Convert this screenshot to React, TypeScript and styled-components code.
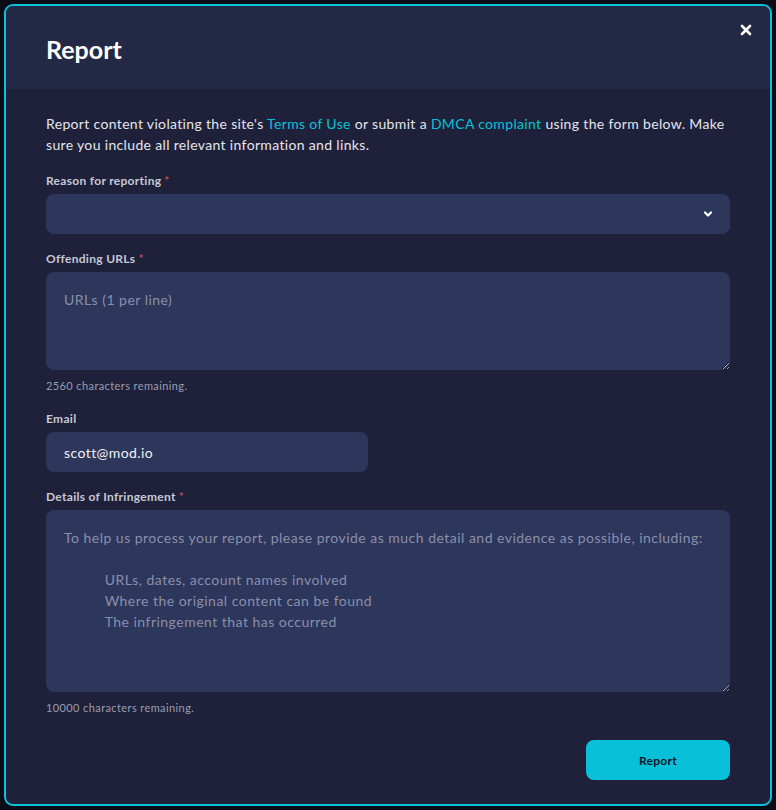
import React from "react";
import styled, { createGlobalStyle } from "styled-components";

const GlobalStyle = createGlobalStyle`
  html, body {
    margin: 0;
    padding: 0;
    background: #0b0d16;
    font-family: Lato, "Noto Sans", sans-serif;
  }
  * {
    box-sizing: border-box;
  }
`;

const Page = styled.div`
  padding: 4px;
  width: 776px;
`;

const Modal = styled.div`
  width: 768px;
  border: 2px solid #0ac2d9;
  border-radius: 9px;
  background: #1e2139;
  overflow: hidden;
`;

const Header = styled.div`
  display: flex;
  align-items: center;
  justify-content: space-between;
  height: 83px;
  padding: 0 40px;
  background: #232944;
  position: relative;
`;

const Title = styled.h1`
  margin: 0;
  padding-top: 2px;
  font-size: 25px;
  font-weight: 700;
  color: #ffffff;
`;

const CloseButton = styled.button`
  position: absolute;
  top: 12px;
  right: 12px;
  width: 24px;
  height: 24px;
  padding: 0;
  border: none;
  background: transparent;
  cursor: pointer;
  display: flex;
  align-items: center;
  justify-content: center;
`;

const Body = styled.div`
  padding: 24px 40px 24px;
  display: flex;
  flex-direction: column;
`;

const Intro = styled.p`
  margin: 0 0 18px;
  font-size: 14px;
  line-height: 21px;
  letter-spacing: 0.34px;
  color: #e4e6ee;

  a {
    color: #0ac2d9;
    text-decoration: none;
  }
`;

const Field = styled.div<{ $gap?: number }>`
  display: flex;
  flex-direction: column;
  margin-bottom: ${(p) => p.$gap ?? 17}px;
`;

const Label = styled.label`
  font-size: 12px;
  line-height: 16px;
  font-weight: 700;
  letter-spacing: 0.3px;
  color: #c6c8d5;
  margin-bottom: 5px;

  span {
    color: #c24650;
    margin-left: 3px;
  }
`;

const SelectBox = styled.div`
  height: 40px;
  border-radius: 8px;
  background: #2d365b;
  display: flex;
  align-items: center;
  justify-content: flex-end;
  padding: 0 17px;
`;

const TextArea = styled.textarea<{ $height: number }>`
  height: ${(p) => p.$height}px;
  width: 100%;
  resize: vertical;
  border: none;
  outline: none;
  border-radius: 8px;
  background: #2d365b;
  padding: 17px 18px;
  font-family: Lato, "Noto Sans", sans-serif;
  font-size: 14px;
  line-height: 21px;
  letter-spacing: 0.48px;
  color: #e4e6ee;

  &::placeholder {
    color: #8a8fac;
    white-space: pre-wrap;
  }
`;

const Input = styled.input<{ $width: number }>`
  width: ${(p) => p.$width}px;
  height: 40px;
  border: none;
  outline: none;
  border-radius: 8px;
  background: #2d365b;
  padding: 0 18px;
  font-family: Lato, "Noto Sans", sans-serif;
  font-size: 14px;
  letter-spacing: 0.42px;
  color: #f1f2f6;
`;

const Helper = styled.div`
  margin-top: 9px;
  font-size: 11px;
  line-height: 14px;
  letter-spacing: 0.4px;
  color: #9a9db2;
`;

const Footer = styled.div`
  display: flex;
  justify-content: flex-end;
  margin-top: 25px;
`;

const SubmitButton = styled.button`
  width: 144px;
  height: 40px;
  border: none;
  border-radius: 8px;
  background: #08c1d8;
  color: #111528;
  font-family: Lato, "Noto Sans", sans-serif;
  font-size: 12px;
  font-weight: 700;
  letter-spacing: 0.3px;
  cursor: pointer;
`;

const detailsPlaceholder =
  "To help us process your report, please provide as much detail and evidence as possible, including:\n\n" +
  "          URLs, dates, account names involved\n" +
  "          Where the original content can be found\n" +
  "          The infringement that has occurred";

function App() {
  return (
    <>
      <GlobalStyle />
      <Page>
        <Modal>
          <Header>
            <Title>Report</Title>
            <CloseButton aria-label="Close">
              <svg width="12" height="12" viewBox="0 0 12 12">
                <path
                  d="M2 2 L10 10 M10 2 L2 10"
                  stroke="#ffffff"
                  strokeWidth="2.6"
                  strokeLinecap="round"
                />
              </svg>
            </CloseButton>
          </Header>
          <Body>
            <Intro>
              Report content violating the site's <a href="#">Terms of Use</a> or submit a{" "}
              <a href="#">DMCA complaint</a> using the form below. Make sure you include all
              relevant information and links.
            </Intro>

            <Field>
              <Label>
                Reason for reporting<span>*</span>
              </Label>
              <SelectBox>
                <svg width="10" height="8" viewBox="0 0 10 8">
                  <path
                    d="M2 2.5 L5 5.5 L8 2.5"
                    stroke="#ffffff"
                    strokeWidth="2.2"
                    fill="none"
                    strokeLinecap="round"
                    strokeLinejoin="round"
                  />
                </svg>
              </SelectBox>
            </Field>

            <Field $gap={18}>
              <Label>
                Offending URLs<span>*</span>
              </Label>
              <TextArea $height={98} placeholder="URLs (1 per line)" />
              <Helper>2560 characters remaining.</Helper>
            </Field>

            <Field>
              <Label>Email</Label>
              <Input $width={322} defaultValue="scott@mod.io" />
            </Field>

            <Field $gap={0}>
              <Label>
                Details of Infringement<span>*</span>
              </Label>
              <TextArea $height={182} placeholder={detailsPlaceholder} />
              <Helper>10000 characters remaining.</Helper>
            </Field>

            <Footer>
              <SubmitButton>Report</SubmitButton>
            </Footer>
          </Body>
        </Modal>
      </Page>
    </>
  );
}

export default App;
